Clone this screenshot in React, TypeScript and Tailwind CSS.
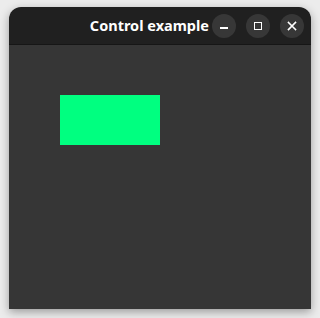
export default function App() {
  return (
    <div className="w-[320px] h-[318px] bg-[#ececec] pt-[7px] pl-[9px] overflow-hidden">
      <div className="w-[302px] h-[302px] flex flex-col rounded-t-[12px] overflow-hidden shadow-[0_3px_10px_rgba(0,0,0,0.35)]">
        <div className="h-[38px] flex items-center bg-[#202020] border-b border-[#161616] pr-[7px]">
          <div className="flex-1" />
          <span className="text-white font-bold text-[14.5px] leading-none font-['Noto_Sans',sans-serif] mr-[3px]">
            Control example
          </span>
          <div className="flex items-center gap-[10px]">
            <button className="w-[24px] h-[24px] rounded-full bg-[#373737] flex items-center justify-center">
              <span className="block w-[8px] h-[2px] bg-white mt-[5px]" />
            </button>
            <button className="w-[24px] h-[24px] rounded-full bg-[#373737] flex items-center justify-center">
              <span className="block w-[8px] h-[8px] border-[1.5px] border-white" />
            </button>
            <button className="w-[24px] h-[24px] rounded-full bg-[#373737] flex items-center justify-center">
              <svg width="10" height="10" viewBox="0 0 10 10" fill="none" stroke="white" strokeWidth="1.6" strokeLinecap="square">
                <path d="M1.5 1.5 L8.5 8.5 M8.5 1.5 L1.5 8.5" />
              </svg>
            </button>
          </div>
        </div>
        <div className="flex-1 bg-[#363636] pt-[50px] pl-[51px]">
          <div className="w-[100px] h-[50px] bg-[#00ff80]" />
        </div>
      </div>
    </div>
  );
}
